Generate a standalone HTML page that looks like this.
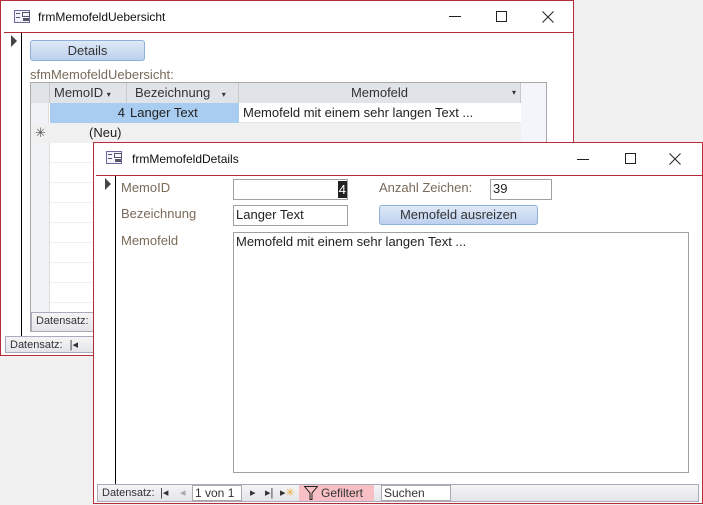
<!DOCTYPE html>
<html><head><style>
*{box-sizing:border-box;margin:0;padding:0}
body{width:703px;height:505px;background:#f0f0f0;position:relative;overflow:hidden;font-family:"Liberation Sans",Calibri,sans-serif;font-size:13px;color:#222}
.a{position:absolute}
.win{position:absolute;background:#fff;border:1px solid #b52b3a}
.title{font-size:12px;color:#111}
.lbl{color:#7a6a5a;font-size:13px}
.box{position:absolute;border:1px solid #a0a0a0;background:#fff;font-size:13px;padding-left:2px;line-height:18px}
.btn{position:absolute;border:1px solid #8fb0d8;border-radius:3px;background:linear-gradient(#dfe9f7,#bcd0ee);text-align:center;color:#333;font-size:13px}
.nav{position:absolute;background:linear-gradient(#f5f5f7,#e4e5e9);border:1px solid #aab;font-size:11px;color:#333}
.hd{position:absolute;top:0;height:20px;background:#e0e3e8;border-right:1px solid #c8c8c8;line-height:19px;color:#333}
.ic{position:absolute;width:16px;height:13px;border:1px solid #6a6aa0;background:#f4f4ff}
.ic:before{content:"";position:absolute;left:1px;top:2px;width:4px;height:1px;background:#556;box-shadow:0 4px #556}
.ic:after{content:"";position:absolute;left:7px;top:1px;width:6px;height:3px;border:1px solid #556;box-shadow:0 5px 0 -1px #556}
</style></head><body>

<div class="win" style="left:0;top:0;width:574px;height:356px">
 <div class="ic" style="left:13px;top:9px"></div>
 <div class="a title" style="left:37px;top:9px">frmMemofeldUebersicht</div>
 <div class="a" style="left:448px;top:15px;width:12px;height:1px;background:#222"></div>
 <div class="a" style="left:495px;top:10px;width:11px;height:11px;border:1px solid #222"></div>
 <svg class="a" style="left:541px;top:10px" width="12" height="12"><path d="M0.5 0.5L11.5 11.5M11.5 0.5L0.5 11.5" stroke="#222" stroke-width="1"/></svg>
 <div class="a" style="left:3px;top:31px;width:570px;height:1px;background:#b52b3a"></div>
 <div class="a" style="left:10px;top:34px;width:0;height:0;border-left:6px solid #444;border-top:6px solid transparent;border-bottom:6px solid transparent"></div>
 <div class="a" style="left:20px;top:32px;width:1px;height:303px;background:#000"></div>
 <div class="btn" style="left:29px;top:39px;width:115px;height:21px;line-height:19px">Details</div>
 <div class="a lbl" style="left:29px;top:66px">sfmMemofeldUebersicht:</div>
 <div class="a" style="left:29px;top:81px;width:517px;height:250px;border:1px solid #aaa;background:#fff;overflow:hidden">
  <div class="a" style="left:0;top:0;width:18px;height:250px;background:#f0f2f8;border-right:1px solid #ddd"></div>
  <div class="hd" style="left:0;width:19px"></div>
  <div class="hd" style="left:19px;width:77px;padding-left:4px">MemoID <span style="font-size:8px">▾</span></div>
  <div class="hd" style="left:96px;width:112px;padding-left:8px">Bezeichnung <span style="font-size:8px;margin-left:8px">▾</span></div>
  <div class="hd" style="left:208px;width:282px;text-align:center">Memofeld<span class="a" style="right:4px;font-size:8px">▾</span></div>
  <div class="a" style="left:490px;top:0;width:27px;height:250px;background:#f4f5fa"></div>
  <div class="a" style="left:19px;top:20px;width:77px;height:20px;background:#a8cdf0;text-align:right;padding-right:2px;line-height:20px">4</div>
  <div class="a" style="left:96px;top:20px;width:112px;height:20px;background:#a8cdf0;padding-left:3px;line-height:20px">Langer Text</div>
  <div class="a" style="left:208px;top:20px;width:282px;height:20px;background:#fff;padding-left:4px;line-height:20px;border-bottom:1px solid #e6e6e6">Memofeld mit einem sehr langen Text ...</div>
  <div class="a" style="left:0;top:40px;width:490px;height:20px;background:#f0f0f0;line-height:20px"><span class="a" style="left:4px;color:#555">✳</span><span class="a" style="left:58px">(Neu)</span></div>
  <div class="a" style="left:0;top:60px;width:490px;height:190px;background:repeating-linear-gradient(#fff 0,#fff 19px,#eee 19px,#eee 20px)"></div>
  <div class="a" style="left:0;top:60px;width:19px;height:190px;background:#f0f2f8;border-right:1px solid #ddd"></div>
  <div class="nav" style="left:0;top:229px;width:517px;height:20px;padding:2px 4px">Datensatz:</div>
 </div>
 <div class="nav" style="left:4px;top:335px;width:200px;height:17px;padding:1px 4px">Datensatz: <span style="margin-left:4px">|◂</span></div>
</div>

<div class="win" style="left:93px;top:142px;width:610px;height:362px">
 <div class="ic" style="left:12px;top:8px"></div>
 <div class="a title" style="left:38px;top:9px">frmMemofeldDetails</div>
 <div class="a" style="left:483px;top:16px;width:12px;height:1px;background:#222"></div>
 <div class="a" style="left:531px;top:10px;width:11px;height:11px;border:1px solid #222"></div>
 <svg class="a" style="left:575px;top:10px" width="12" height="12"><path d="M0.5 0.5L11.5 11.5M11.5 0.5L0.5 11.5" stroke="#222" stroke-width="1"/></svg>
 <div class="a" style="left:2px;top:32px;width:606px;height:1px;background:#b52b3a"></div>
 <div class="a" style="left:11px;top:35px;width:0;height:0;border-left:6px solid #444;border-top:6px solid transparent;border-bottom:6px solid transparent"></div>
 <div class="a" style="left:21px;top:33px;width:1px;height:308px;background:#000"></div>
 <div class="a lbl" style="left:27px;top:37px">MemoID</div>
 <div class="a lbl" style="left:27px;top:63px">Bezeichnung</div>
 <div class="a lbl" style="left:27px;top:90px">Memofeld</div>
 <div class="box" style="left:139px;top:36px;width:115px;height:21px"><span class="a" style="right:0;top:1px;background:#222;color:#fff;line-height:17px;padding:0 1px">4</span></div>
 <div class="a lbl" style="left:285px;top:37px">Anzahl Zeichen:</div>
 <div class="box" style="left:396px;top:36px;width:62px;height:21px">39</div>
 <div class="box" style="left:139px;top:62px;width:115px;height:21px">Langer Text</div>
 <div class="btn" style="left:285px;top:62px;width:159px;height:20px;line-height:18px">Memofeld ausreizen</div>
 <div class="box" style="left:139px;top:89px;width:456px;height:241px">Memofeld mit einem sehr langen Text ...</div>
 <div class="nav" style="left:3px;top:341px;width:602px;height:18px;line-height:16px;padding-left:4px">Datensatz:
  <span class="a" style="left:62px">|◂</span><span class="a" style="left:82px;color:#aaa">◂</span>
  <span class="a" style="left:94px;top:0;width:50px;height:16px;background:#fff;border:1px solid #aaa;padding-left:2px;font-size:12px;line-height:14px">1 von 1</span>
  <span class="a" style="left:152px">▸</span><span class="a" style="left:167px">▸|</span><span class="a" style="left:182px">▸<span style="color:#e9a53c">✳</span></span>
  <span class="a" style="left:201px;top:0;width:75px;height:16px;background:#f8c0c4;padding-left:22px;font-size:12px">Gefiltert</span>
  <svg class="a" style="left:206px;top:1px" width="14" height="14"><path d="M0.5 0.5H13.5L8 7V13.5H6V7Z" fill="none" stroke="#222"/></svg>
  <span class="a" style="left:283px;top:0;width:70px;height:16px;background:#fff;border:1px solid #aaa;padding-left:2px;font-size:12px;line-height:14px">Suchen</span>
 </div>
</div>
</body></html>
